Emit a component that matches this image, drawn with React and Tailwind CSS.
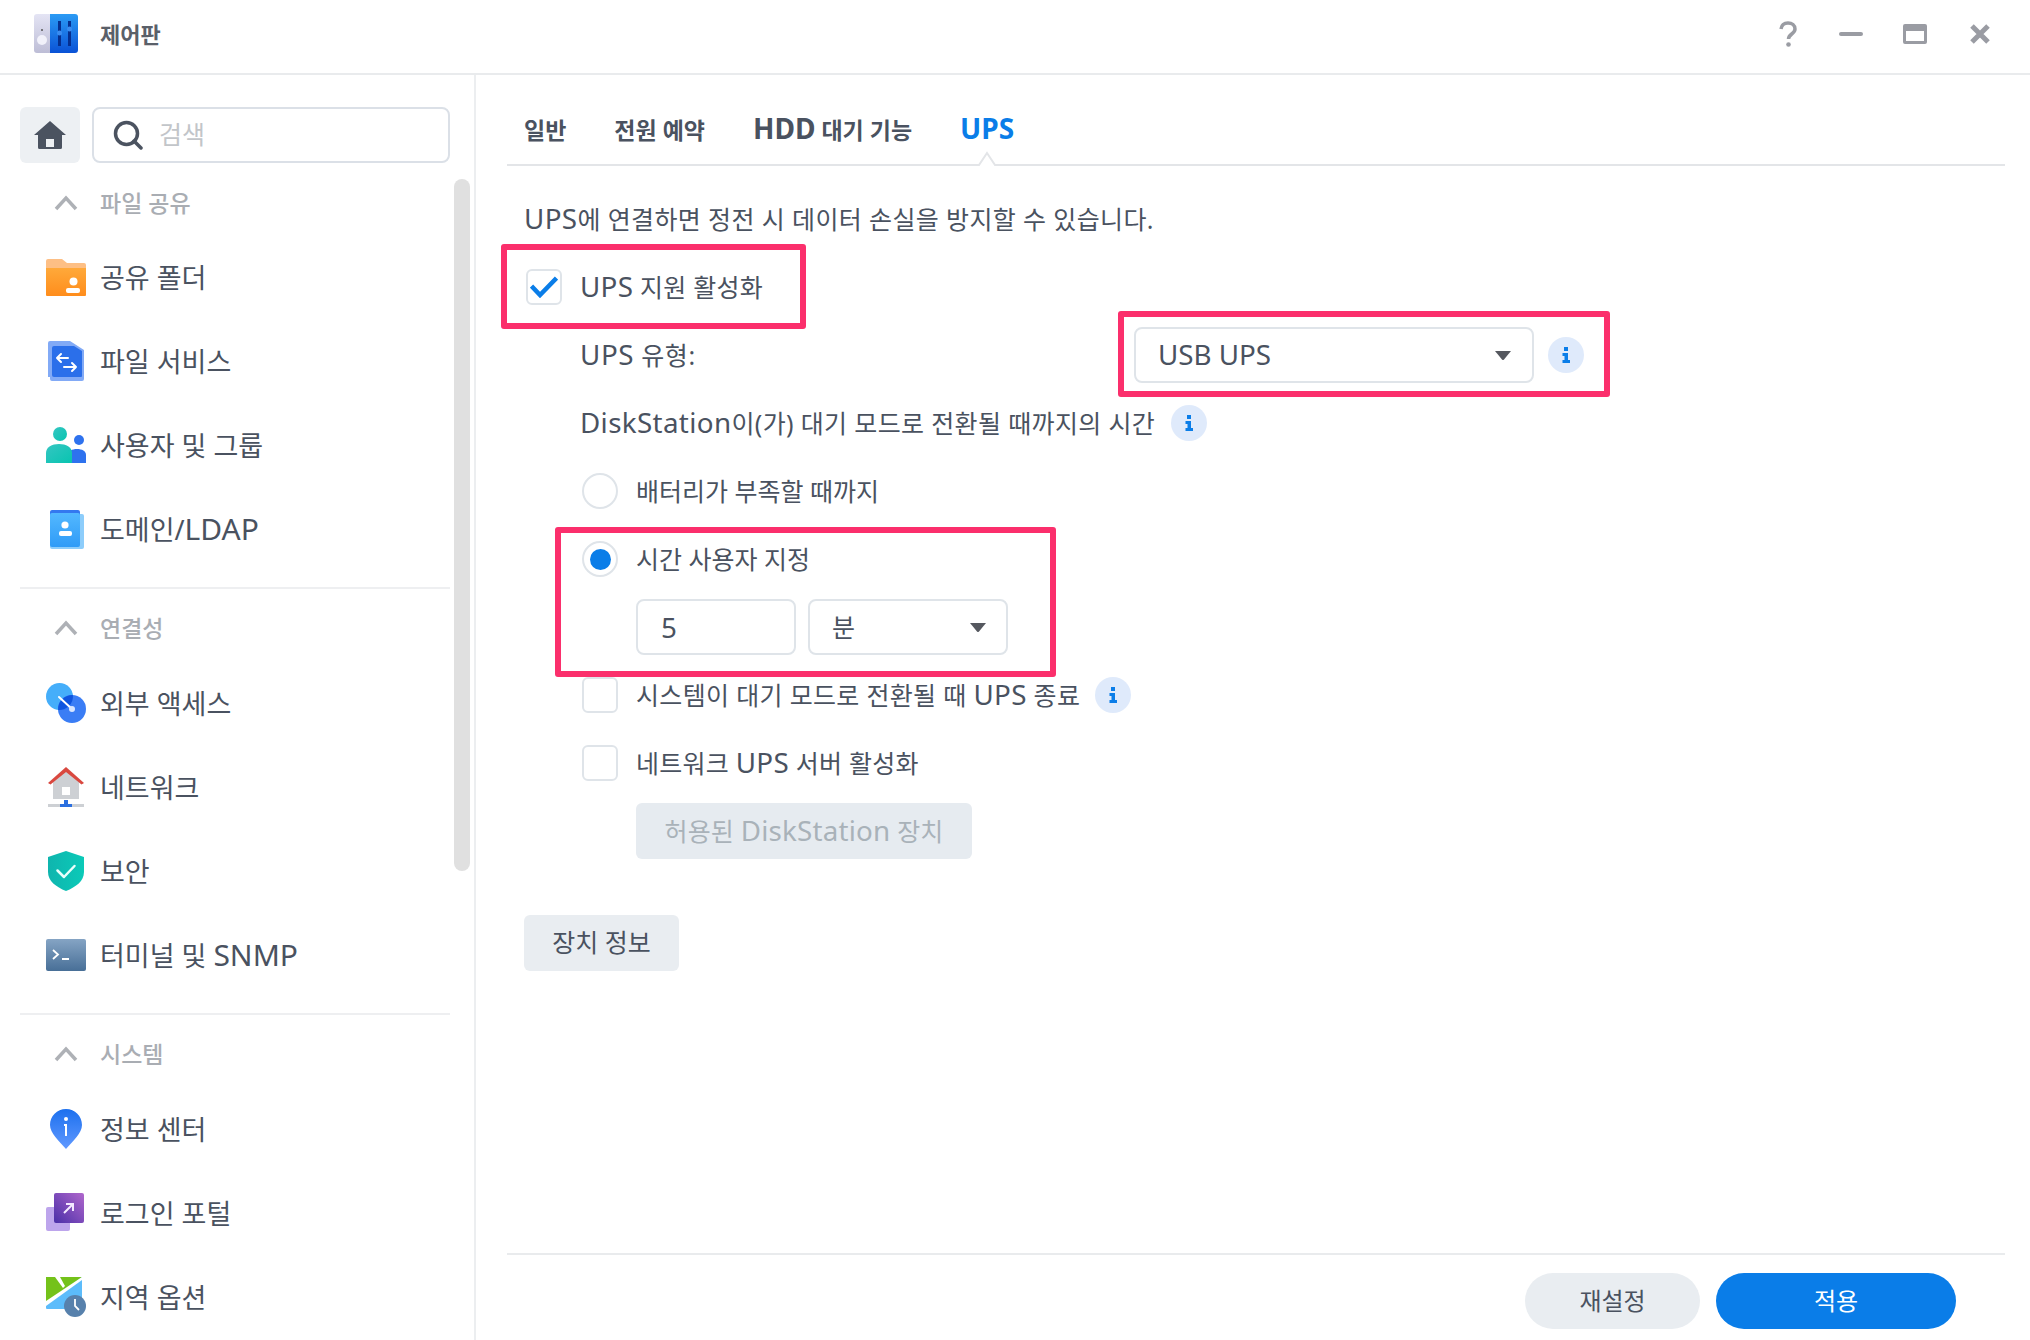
import React from "react";

const FONT = { fontFamily: '"Noto Sans", "Noto Sans CJK KR", sans-serif' };

// latin glyphs in the reference run larger than the hangul next to them
const L = ({ children }) => <span className="text-[1.11em] leading-none">{children}</span>;
const TabL = ({ children }) => <span className="text-[1.22em] leading-none">{children}</span>;

const AppLogo = () => (
  <svg width="44" height="40" viewBox="0 0 44 40">
    <defs>
      <linearGradient id="logoL" x1="0" y1="0" x2="0" y2="1">
        <stop offset="0" stopColor="#e4e4f4" />
        <stop offset="1" stopColor="#bdbdd6" />
      </linearGradient>
      <linearGradient id="logoR" x1="0" y1="0" x2="0" y2="1">
        <stop offset="0" stopColor="#2b9bf4" />
        <stop offset="1" stopColor="#0a52d6" />
      </linearGradient>
    </defs>
    <path d="M3 0h14v39H3a3 3 0 0 1-3-3V3a3 3 0 0 1 3-3z" fill="url(#logoL)" />
    <path d="M16 0h25a3 3 0 0 1 3 3v33a3 3 0 0 1-3 3H16z" fill="url(#logoR)" />
    <circle cx="8" cy="26" r="5" fill="#f1f1fa" />
    <circle cx="8" cy="16" r="1" fill="#555" />
    <rect x="24" y="7" width="3" height="25" fill="#052f8f" />
    <rect x="34" y="7" width="3" height="25" fill="#052f8f" />
    <circle cx="25.5" cy="19" r="2.5" fill="#3a8cf0" />
    <circle cx="35.5" cy="15" r="2.5" fill="#3a8cf0" />
  </svg>
);

const FolderIcon = () => (
  <svg width="40" height="40" viewBox="0 0 40 40">
    <defs>
      <linearGradient id="fold" x1="0" y1="0" x2="0" y2="1">
        <stop offset="0" stopColor="#ffa93a" />
        <stop offset="1" stopColor="#ff8d1c" />
      </linearGradient>
    </defs>
    <path d="M0 4a2 2 0 0 1 2-2h14l5 4h17a2 2 0 0 1 2 2v4H0z" fill="#fdbf85" />
    <path d="M0 11h40v27a1 1 0 0 1-1 1H1a1 1 0 0 1-1-1z" fill="url(#fold)" />
    <circle cx="27.5" cy="24.5" r="4" fill="#fff" />
    <rect x="20" y="31" width="14" height="5" rx="2" fill="#fff" />
  </svg>
);

const FileServiceIcon = () => (
  <svg width="40" height="40" viewBox="0 0 40 40">
    <path d="M2 2a2 2 0 0 1 2-2h20l14 9v29a2 2 0 0 1-2 2H6a2 2 0 0 1-2-2v-2H2z" fill="#82aaf6" />
    <path d="M6 7a2 2 0 0 1 2-2h20l8 5v25a1 1 0 0 1-1 1H8a2 2 0 0 1-2-2z" fill="#2b6fea" />
    <g fill="none" stroke="#fff" strokeWidth="2" strokeLinecap="round" strokeLinejoin="round">
      <path d="M11 17h11M15 13l-4 4 4 4" />
      <path d="M30 26H18M26 22l4 4-4 4" />
    </g>
  </svg>
);

const UsersIcon = () => (
  <svg width="40" height="40" viewBox="0 0 40 40">
    <defs>
      <linearGradient id="usr" x1="0" y1="0" x2="1" y2="1">
        <stop offset="0" stopColor="#35c6c2" />
        <stop offset="1" stopColor="#08c4b0" />
      </linearGradient>
    </defs>
    <circle cx="33" cy="15" r="5" fill="#2e72ee" />
    <path d="M22 38V30c0-4 4-6 9-6s9 2 9 6v8z" fill="#2e72ee" />
    <circle cx="14" cy="9" r="7" fill="url(#usr)" />
    <path d="M0 38V28c0-6 6-9 13-9s13 3 13 9v10z" fill="url(#usr)" />
  </svg>
);

const DomainIcon = () => (
  <svg width="40" height="40" viewBox="0 0 40 40">
    <defs>
      <linearGradient id="dom" x1="0" y1="0" x2="0" y2="1">
        <stop offset="0" stopColor="#53b8ff" />
        <stop offset="1" stopColor="#2f9bf7" />
      </linearGradient>
    </defs>
    <rect x="4" y="5" width="34" height="35" rx="2" fill="#8dcdfb" />
    <path d="M4 3a2 2 0 0 1 2-2h26a2 2 0 0 1 2 2v4H4z" fill="#3478ef" />
    <rect x="4" y="4" width="30" height="34" rx="2" fill="url(#dom)" />
    <circle cx="19" cy="16" r="3.6" fill="#fff" />
    <rect x="13" y="22" width="13" height="5" rx="2" fill="#fff" />
  </svg>
);

const ExternalIcon = () => (
  <svg width="40" height="40" viewBox="0 0 40 40">
    <circle cx="13.5" cy="13.5" r="13.5" fill="#45aefa" />
    <circle cx="26" cy="26" r="14" fill="#3a7df5" />
    <path d="M12.100 26.900A13.500 13.500 0 0 0 26.900 12.100 14 14 0 0 0 12.100 26.900z" fill="#0f55e0" />
    <path d="M13 14 26 26" stroke="#fff" strokeWidth="2" strokeLinecap="round" />
    <circle cx="26" cy="26" r="3" fill="#d8e6ff" />
  </svg>
);

const NetworkIcon = () => (
  <svg width="40" height="40" viewBox="0 0 40 40">
    <path d="M7 15 20 4l13 11v17H7z" fill="#cdd0d4" />
    <path d="M2 16 20 0l18 16-2.500 1.500L20 5 4.500 17.500z" fill="#d9483f" />
    <rect x="16" y="20" width="8" height="8" fill="#fff" />
    <rect x="2" y="37" width="36" height="3" fill="#cdd0d4" />
    <rect x="18" y="33" width="4" height="5" fill="#2b6fe0" />
    <rect x="14" y="37" width="12" height="3" fill="#2b6fe0" />
  </svg>
);

const ShieldIcon = () => (
  <svg width="40" height="40" viewBox="0 0 40 40">
    <defs>
      <linearGradient id="shd" x1="0" y1="0" x2="1" y2="0">
        <stop offset="0" stopColor="#0fb5ae" />
        <stop offset="1" stopColor="#0bcab8" />
      </linearGradient>
    </defs>
    <path d="M20 0 38 6v15c0 9-8 15-18 19C10 36 2 30 2 21V6z" fill="url(#shd)" />
    <path d="M11.500 19.500 18 26l10.500-11" fill="none" stroke="#eafffb" strokeWidth="2.500" strokeLinecap="round" strokeLinejoin="round" />
  </svg>
);

const TerminalIcon = () => (
  <svg width="40" height="32" viewBox="0 0 40 32">
    <defs>
      <linearGradient id="trm" x1="0" y1="0" x2="0" y2="1">
        <stop offset="0" stopColor="#85a4c4" />
        <stop offset="1" stopColor="#486f97" />
      </linearGradient>
    </defs>
    <rect width="40" height="32" rx="2" fill="url(#trm)" />
    <path d="M7 11l5 4.500L7 20" fill="none" stroke="#fff" strokeWidth="1.800" />
    <rect x="16" y="19" width="7" height="2" fill="#fff" />
  </svg>
);

const InfoPinIcon = () => (
  <svg width="40" height="40" viewBox="0 0 40 40">
    <defs>
      <linearGradient id="pin" x1="0" y1="0" x2="0" y2="1">
        <stop offset="0" stopColor="#1c70ee" />
        <stop offset="1" stopColor="#6199ff" />
      </linearGradient>
    </defs>
    <path d="M20 0c9 0 16 7 16 16 0 8-9 16-16 24C13 32 4 24 4 16 4 7 11 0 20 0z" fill="url(#pin)" />
    <rect x="18" y="8" width="4" height="4" rx="2" fill="#fff" />
    <path d="M18 15h3v12h-2V17h-1z" fill="#fff" />
  </svg>
);

const PortalIcon = () => (
  <svg width="40" height="40" viewBox="0 0 40 40">
    <defs>
      <linearGradient id="prt" x1="0" y1="1" x2="1" y2="0">
        <stop offset="0" stopColor="#4a2fa8" />
        <stop offset="1" stopColor="#b067cc" />
      </linearGradient>
    </defs>
    <rect y="14" width="24" height="24" rx="2" fill="#bda5ec" />
    <rect x="8" width="30" height="30" rx="2" fill="url(#prt)" />
    <path d="M18 20l9-9M20 11h7v7" fill="none" stroke="#f4e9ff" strokeWidth="2" />
  </svg>
);

const RegionIcon = () => (
  <svg width="40" height="40" viewBox="0 0 40 40">
    <rect width="36" height="32" rx="1" fill="#5cbcfb" />
    <path d="M0 0h36L0 27z" fill="#74c21a" />
    <path d="M0 24 36 0v3L0 29z" fill="#fff" />
    <path d="M9 0l8 11 2-2-5-9z" fill="#fff" />
    <circle cx="29" cy="29" r="11" fill="#5781ac" />
    <path d="M29 22v7l4 4" fill="none" stroke="#fff" strokeWidth="1.800" />
  </svg>
);

const InfoBadge = ({ className = "" }) => (
  <svg width="36" height="36" viewBox="0 0 36 36" className={`shrink-0 ${className}`}>
    <circle cx="18" cy="18" r="18" fill="#dfeafb" />
    <rect x="16" y="10" width="4" height="4" fill="#0a7de8" />
    <path d="M14.500 16H20v7h2v3h-7.500v-3h2v-4h-2z" fill="#0a7de8" />
  </svg>
);

const Caret = () => (
  <svg width="16" height="9" viewBox="0 0 16 9">
    <path d="M0 0h16L9 8.500a1.300 1.300 0 0 1-2 0z" fill="#55585f" />
  </svg>
);

const Chevron = () => (
  <svg width="24" height="16" viewBox="0 0 24 16">
    <path d="M2 14 12 3l10 11" fill="none" stroke="#aeb1b6" strokeWidth="3.500" />
  </svg>
);

const sections = [
  {
    title: "파일 공유",
    items: [
      { label: "공유 폴더", Icon: FolderIcon },
      { label: "파일 서비스", Icon: FileServiceIcon },
      { label: "사용자 및 그룹", Icon: UsersIcon },
      { label: <>도메인/<L>LDAP</L></>, Icon: DomainIcon },
    ],
  },
  {
    title: "연결성",
    items: [
      { label: "외부 액세스", Icon: ExternalIcon },
      { label: "네트워크", Icon: NetworkIcon },
      { label: "보안", Icon: ShieldIcon },
      { label: <>터미널 및 <L>SNMP</L></>, Icon: TerminalIcon },
    ],
  },
  {
    title: "시스템",
    items: [
      { label: "정보 센터", Icon: InfoPinIcon },
      { label: "로그인 포털", Icon: PortalIcon },
      { label: "지역 옵션", Icon: RegionIcon },
    ],
  },
];

const Box = ({ round, children }) => (
  <div
    className={`w-9 h-9 shrink-0 border-2 border-[#dfe4e9] flex items-center justify-center bg-white ${
      round ? "rounded-full" : "rounded-[6px]"
    }`}
  >
    {children}
  </div>
);

const Sidebar = () => (
  <aside className="relative w-[476px] shrink-0 border-r-2 border-[#eceef0] overflow-hidden">
    <div className="flex gap-3 pl-5 pt-8 mb-3">
      <div className="w-[60px] h-14 rounded-md bg-[#edf0f3] flex items-center justify-center">
        <svg width="32" height="28" viewBox="0 0 32 28">
          <path
            d="M16 0 32 14h-4v12.500a1.500 1.500 0 0 1-1.500 1.500h-21A1.500 1.500 0 0 1 4 26.500V14H0zM12 18v8h8v-8z"
            fill="#4b5360"
            fillRule="evenodd"
          />
        </svg>
      </div>
      <div className="w-[358px] h-14 rounded-lg border-2 border-[#dbe0e7] flex items-center pl-[19px] gap-4">
        <svg width="30" height="30" viewBox="0 0 30 30">
          <circle cx="13.500" cy="13.500" r="11" fill="none" stroke="#4b5360" strokeWidth="3.500" />
          <path d="M21 21l7 7" stroke="#4b5360" strokeWidth="3.500" strokeLinecap="round" />
        </svg>
        <span className="text-[25px] text-[#c2c5c9]">검색</span>
      </div>
    </div>

    {sections.map((section, i) => (
      <div key={section.title}>
        {i > 0 && <div className="ml-5 mr-6 mt-4 mb-[11px] h-0.5 bg-[#eeeff1]" />}
        <div className={`h-14 flex items-center pl-[54px] gap-[22px] ${i === 0 ? "mb-1" : "mb-[5px]"}`}>
          <Chevron />
          <span className="text-[23px] font-medium text-[#a9adb3]">{section.title}</span>
        </div>
        {section.items.map(({ label, Icon }, j) => (
          <div key={j} className="h-[84px] flex items-center pl-[46px] gap-[14px]">
            <div className="w-10 flex justify-center">
              <Icon />
            </div>
            <span className="text-[27px] leading-9 pt-0.5 text-[#4a5260]">{label}</span>
          </div>
        ))}
      </div>
    ))}

    {/* overlay scrollbar */}
    <div className="absolute left-[454px] top-[104px] w-4 h-[692px] rounded-full bg-[#e0e0e0]" />
  </aside>
);

const Highlight = ({ className }) => (
  <div className={`absolute border-[6px] border-[#fb2f6c] rounded-[3px] pointer-events-none ${className}`} />
);

const Row = ({ className = "", children }) => (
  <div className={`relative h-[68px] flex items-center [&>span]:pt-0.5 ${className}`}>{children}</div>
);

const SelectBox = ({ value, className }) => (
  <div className={`h-14 border-2 border-[#dfe4e9] rounded-lg flex items-center justify-between ${className}`}>
    <span className="pt-0.5">{value}</span>
    <Caret />
  </div>
);

const Main = () => (
  <main className="flex-1 flex flex-col min-w-0">
    <div className="relative ml-[31px] mr-[25px] h-[91px] border-b-2 border-[#e3e5e8] flex items-center pl-[17px] pt-[21px] gap-12 text-[23px] font-bold text-[#4a5260]">
      <span>일반</span>
      <span>전원 예약</span>
      <span><TabL>HDD</TabL> 대기 기능</span>
      <span className="text-[#0a7de8]"><TabL>UPS</TabL></span>
      <svg width="30" height="15" viewBox="0 0 30 15" className="absolute left-[465px] -bottom-0.5">
        <path d="M0 14h7L15 2l8 12h7v1H0z" fill="#fff" />
        <path d="M0 14h7L15 2l8 12h7" fill="none" stroke="#e3e5e8" strokeWidth="2" />
      </svg>
    </div>

    <div className="flex-1 pl-[48px] pt-[19px] text-[25px] text-[#4a5260]">
      <Row><span className="tracking-[0.38px]"><L>UPS</L>에 연결하면 정전 시 데이터 손실을 방지할 수 있습니다.</span></Row>

      <Row className="pl-0.5 gap-[18px]">
        <Highlight className="-left-[23px] -top-[9px] w-[305px] h-[85px]" />
        <Box>
          <svg width="28" height="22" viewBox="0 0 28 22">
            <path d="M1.500 10l8.500 9L26.500 2" fill="none" stroke="#0a7de8" strokeWidth="4.500" />
          </svg>
        </Box>
        <span className="tracking-[0.28px]"><L>UPS</L> 지원 활성화</span>
      </Row>

      <Row className="pl-[56px]">
        <Highlight className="left-[594px] -top-[10px] w-[492px] h-[86px]" />
        <span className="w-[554px] tracking-[0.6px]"><L>UPS</L> 유형:</span>
        <SelectBox value={<L>USB UPS</L>} className="w-[400px] pl-[22px] pr-[21px]" />
        <div className="ml-[14px]">
          <InfoBadge />
        </div>
      </Row>

      <Row className="pl-[56px] gap-4">
        <span className="tracking-[0.36px]"><L>DiskStation</L>이(가) 대기 모드로 전환될 때까지의 시간</span>
        <InfoBadge />
      </Row>

      <Row className="pl-[58px] gap-[18px]">
        <Box round />
        <span>배터리가 부족할 때까지</span>
      </Row>

      <Row className="pl-[58px] gap-[18px]">
        <Highlight className="left-[31px] top-[2px] w-[501px] h-[150px]" />
        <Box round>
          <div className="w-[21px] h-[21px] rounded-full bg-[#0a7de8]" />
        </Box>
        <span>시간 사용자 지정</span>
      </Row>

      <Row className="pl-[112px] gap-3">
        <div className="w-[160px] h-14 border-2 border-[#dfe4e9] rounded-lg flex items-center pl-[23px] pt-0.5"><L>5</L></div>
        <SelectBox value="분" className="w-[200px] pl-[22px] pr-5" />
      </Row>

      <Row className="pl-[58px] gap-[18px]">
        <Box />
        <span className="tracking-[0.33px]">시스템이 대기 모드로 전환될 때 <L>UPS</L> 종료</span>
        <InfoBadge className="-ml-[3px]" />
      </Row>

      <Row className="pl-[58px] gap-[18px]">
        <Box />
        <span className="tracking-[0.26px]">네트워크 <L>UPS</L> 서버 활성화</span>
      </Row>

      <Row className="pl-[112px]">
        <div className="w-[336px] h-14 rounded-md bg-[#e6ebf0] text-[#a9b2b9] flex items-center justify-center pt-0.5">
          <span className="tracking-[0.2px]">허용된 <L>DiskStation</L> 장치</span>
        </div>
      </Row>

      <div className="mt-[50px] w-[155px] h-14 rounded-md bg-[#e9edf1] flex items-center justify-center">
        장치 정보
      </div>
    </div>

    <div className="ml-[31px] mr-[25px] h-[87px] border-t-2 border-[#e9ebed] flex items-start justify-end pt-[18px] pr-[49px] gap-4 text-[24px]">
      <div className="w-[175px] h-14 rounded-full bg-[#e9edf1] text-[#4a5260] flex items-center justify-center">재설정</div>
      <div className="w-[240px] h-14 rounded-full bg-[#0a7de8] text-white flex items-center justify-center">적용</div>
    </div>
  </main>
);

export default function App() {
  return (
    <div className="w-[2030px] h-[1340px] bg-white flex flex-col overflow-hidden" style={FONT}>
      <header className="h-[75px] shrink-0 border-b-2 border-[#e9ebed] flex items-center pl-[34px] pr-[40px] pb-[5px]">
        <AppLogo />
        <span className="ml-[22px] text-[22px] font-bold text-[#5a6069]">제어판</span>
        <div className="ml-auto flex items-center">
          <svg width="20" height="26" viewBox="0 0 20 26" className="mr-[41px]">
            <path d="M3 8C3.500 4.500 6 2 10 2s7 2.500 7 6c0 5-6.500 5-6.500 10" fill="none" stroke="#9a9ca3" strokeWidth="3.500" />
            <circle cx="10.500" cy="23.500" r="2.300" fill="#9a9ca3" />
          </svg>
          <div className="w-6 h-1 rounded-full bg-[#9a9ca3] mr-10" />
          <svg width="24" height="20" viewBox="0 0 24 20" className="mr-[43px]">
            <path d="M2 0h20a2 2 0 0 1 2 2v16a2 2 0 0 1-2 2H2a2 2 0 0 1-2-2V2a2 2 0 0 1 2-2zm1 7v10h18V7z" fill="#9a9ca3" fillRule="evenodd" />
          </svg>
          <svg width="20" height="20" viewBox="0 0 20 20">
            <path d="M2 2l16 16M18 2 2 18" stroke="#9a9ca3" strokeWidth="5" />
          </svg>
        </div>
      </header>
      <div className="flex-1 flex min-h-0">
        <Sidebar />
        <Main />
      </div>
    </div>
  );
}
